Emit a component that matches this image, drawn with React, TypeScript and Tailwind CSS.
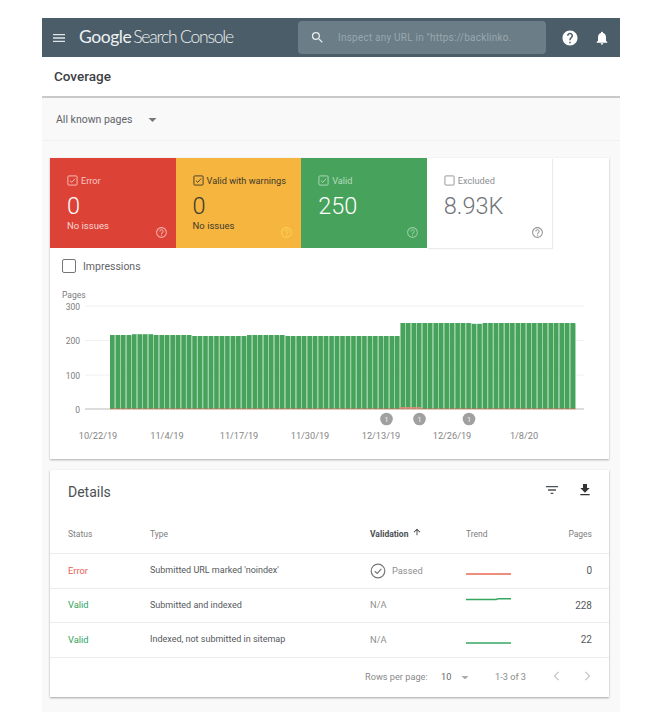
import React from "react";

const P = {
  menu: "M3 18h18v-2H3v2zm0-5h18v-2H3v2zm0-7v2h18V6H3z",
  search: "M15.5 14h-.79l-.28-.27A6.47 6.47 0 0 0 16 9.5 6.5 6.5 0 1 0 9.5 16c1.61 0 3.09-.59 4.23-1.57l.27.28v.79l5 4.99L20.49 19l-4.99-5zm-6 0C7.01 14 5 11.99 5 9.5S7.01 5 9.5 5 14 7.01 14 9.5 11.99 14 9.5 14z",
  help: "M12 2C6.48 2 2 6.48 2 12s4.48 10 10 10 10-4.48 10-10S17.52 2 12 2zm1 17h-2v-2h2v2zm2.07-7.75l-.9.92C13.45 12.9 13 13.5 13 15h-2v-.5c0-1.1.45-2.1 1.17-2.83l1.24-1.26c.37-.36.59-.86.59-1.41 0-1.1-.9-2-2-2s-2 .9-2 2H8c0-2.21 1.79-4 4-4s4 1.79 4 4c0 .88-.36 1.68-.93 2.25z",
  bell: "M12 22c1.1 0 2-.9 2-2h-4c0 1.1.89 2 2 2zm6-6v-5c0-3.07-1.64-5.64-4.5-6.32V4c0-.83-.67-1.5-1.5-1.5s-1.5.67-1.5 1.5v.68C7.63 5.36 6 7.92 6 11v5l-2 2v1h16v-1l-2-2z",
  filter: "M10 18h4v-2h-4v2zM3 6v2h18V6H3zm3 7h12v-2H6v2z",
  download: "M19 9h-4V3H9v6H5l7 7 7-7zM5 18v2h14v-2H5z",
  helpOutline: "M11 18h2v-2h-2v2zm1-16C6.48 2 2 6.48 2 12s4.48 10 10 10 10-4.48 10-10S17.52 2 12 2zm0 18c-4.41 0-8-3.59-8-8s3.59-8 8-8 8 3.59 8 8-3.59 8-8 8zm0-14c-2.21 0-4 1.79-4 4h2c0-1.1.9-2 2-2s2 .9 2 2c0 2-3 1.75-3 5h2c0-2.25 3-2.5 3-5 0-2.21-1.79-4-4-4z",
  arrowUp: "M4 12l1.41 1.41L11 7.83V20h2V7.83l5.58 5.59L20 12l-8-8-8 8z",
};

function Icon({ d, className }: { d: string; className: string }) {
  return (
    <svg viewBox="0 0 24 24" className={className} fill="currentColor">
      <path d={d} />
    </svg>
  );
}

function Check({ checked, className }: { checked: boolean; className: string }) {
  return (
    <svg viewBox="0 0 12 12" className={className} fill="none" stroke="currentColor">
      <rect x="1" y="1" width="10" height="10" rx="1" strokeWidth="1" />
      {checked && <path d="M3.2 6.2 5.2 8 8.8 4" strokeWidth="1" />}
    </svg>
  );
}

const tiles = [
  { label: "Error", value: "0", sub: "No issues", bg: "bg-[#dd4237]", text: "text-white", labelC: "text-[#f6c6c1]", subC: "text-[#f8d5d1]", helpC: "text-[#f1aaa4]", checked: true },
  { label: "Valid with warnings", value: "0", sub: "No issues", bg: "bg-[#f5b53f]", text: "text-[#3c3a30]", labelC: "text-[#3f3a2c]", subC: "text-[#3f3a2c]", helpC: "text-[#fbcf4e]", checked: true },
  { label: "Valid", value: "250", sub: "", bg: "bg-[#47a25b]", text: "text-white", labelC: "text-[#b5dcbf]", subC: "", helpC: "text-[#8ecba0]", checked: true },
  { label: "Excluded", value: "8.93K", sub: "", bg: "bg-white shadow-[1px_1px_1px_rgba(0,0,0,0.08)]", text: "text-[#6f7478]", labelC: "text-[#8c8f92]", subC: "", helpC: "text-[#9a9a9a]", checked: false },
];

const barTop = (i: number) => {
  if (i < 4) return 335;
  if (i < 8) return 334.2;
  if (i < 15) return 335;
  if (i < 25) return 336;
  if (i < 32) return 335;
  if (i < 53) return 336;
  if (i === 66 || i === 67) return 323.8;
  return 323;
};

const bars = Array.from({ length: 85 }, (_, i) => i);
const grid = [
  { y: 306, t: "300" },
  { y: 340.5, t: "200" },
  { y: 375, t: "100" },
  { y: 409, t: "0" },
];
const dates = [
  [98, "10/22/19"],
  [167, "11/4/19"],
  [239, "11/17/19"],
  [310, "11/30/19"],
  [381, "12/13/19"],
  [452, "12/26/19"],
  [524, "1/8/20"],
] as const;

function Chart() {
  // drawn in page coordinates
  return (
    <svg viewBox="50 285 559 174" className="block h-[174px] w-[559px]" fontFamily="Roboto, sans-serif">
      <text x="62" y="298" fontSize="8.5" fill="#7c7c7c">Pages</text>
      {grid.map((g) => (
        <g key={g.t}>
          <line x1="85" x2="584" y1={g.y} y2={g.y} stroke={g.t === "0" ? "#a8a8a8" : "#ececec"} strokeWidth="0.8" />
          <text x="80" y={g.y + 3.5} fontSize="8.5" textAnchor="end" fill="#7c7c7c">{g.t}</text>
        </g>
      ))}
      {bars.map((i) => {
        const x = 110 + i * 5.48;
        const t = barTop(i);
        return <rect key={i} x={x} y={t} width={4.7} height={409 - t} fill="#47a25b" />;
      })}
      {bars.map((i) => (
        <rect key={i} x={110 + i * 5.48 + 4.7} y={barTop(i) + 0.5} width={0.78} height={408 - barTop(i)} fill="#8ccb9c" />
      ))}
      <line x1="110" x2="576" y1="408.8" y2="408.8" stroke="#e8624f" strokeWidth="0.6" />
      <rect x="400" y="407.2" width="21" height="1.4" fill="#ee8a7c" />
      {[386.5, 419.5, 469].map((cx) => (
        <g key={cx}>
          <circle cx={cx} cy="419" r="6.3" fill="#a0a0a0" />
          <text x={cx} y="422" fontSize="8" textAnchor="middle" fill="#ececec">1</text>
        </g>
      ))}
      {dates.map(([x, t]) => (
        <text key={t} x={x} y="439" fontSize="9.2" textAnchor="middle" fill="#858585">{t}</text>
      ))}
    </svg>
  );
}

function Trend({ color, d }: { color: string; d: string }) {
  return (
    <svg viewBox="0 0 45 14" className="h-[14px] w-[45px]" fill="none" stroke={color} strokeWidth="1.6">
      <path d={d} />
    </svg>
  );
}

const rows = [
  { status: "Error", c: "text-[#e8604f]", type: "Submitted URL marked 'noindex'", val: "Passed", trend: "#e8694f", d: "M0 10H45", pages: "0" },
  { status: "Valid", c: "text-[#2fa35a]", type: "Submitted and indexed", val: "N/A", trend: "#35a860", d: "M0 1.5H30L33 .6H45", pages: "228" },
  { status: "Valid", c: "text-[#2fa35a]", type: "Indexed, not submitted in sitemap", val: "N/A", trend: "#35a860", d: "M0 10H45", pages: "22" },
];

const cols = "grid grid-cols-[82px_220px_96px_45px_1fr] items-center pl-[18px] pr-[17px]";

export default function App() {
  return (
    <div className="h-[716px] w-[665px] overflow-hidden bg-white pl-[42px] pt-[18px] font-['Roboto',sans-serif]">
      <div className="flex w-[578px] flex-col">
        <header className="flex h-[39px] items-center bg-[#4a5d68] text-white">
          <Icon d={P.menu} className="ml-[9px] h-[16px] w-[16px] text-[#dfe5e8]" />
          <span className="ml-[12px] w-[160px] whitespace-nowrap font-['Lato',sans-serif] text-[17.5px] tracking-[-0.45px] text-[#eef1f2]">
            <span>Google</span> <span className="ml-[-2px] font-light tracking-[-1.2px]">Search Console</span>
          </span>
          <div className="ml-[59px] flex h-[33px] w-[248px] items-center rounded-[4px] bg-[#6b7d86]">
            <Icon d={P.search} className="ml-[12px] h-[15px] w-[15px] text-[#e8ecee]" />
            <span className="ml-[13px] whitespace-nowrap text-[10px] tracking-[0.22px] text-[#9aa8ae]">Inspect any URL in "https://backlinko.</span>
          </div>
          <Icon d={P.help} className="ml-[15px] h-[18px] w-[18px] text-white" />
          <Icon d={P.bell} className="ml-[15px] h-[16px] w-[16px] text-white" />
        </header>

        <div className="flex h-[41px] items-center border-b-2 border-[#c9c9c9] bg-white pl-[12px] text-[13.5px] font-medium text-[#3c4043]">
          Coverage
        </div>

        <main className="flex h-[614px] flex-col bg-[#f9f9f9]">
          <div className="flex h-[43px] shrink-0 items-center border-b border-[#f0f0f0] pl-[14px] pt-[1px] text-[10.5px] text-[#5f6368]">
            All known pages
            <svg viewBox="0 0 10 5" className="ml-[16px] h-[4px] w-[9px] text-[#777]" fill="currentColor">
              <path d="M0 0h10L5 5z" />
            </svg>
          </div>

          <section className="ml-[8px] mt-[17px] h-[301px] w-[559px] shrink-0 bg-white shadow-[0_1px_2px_rgba(0,0,0,0.3)]">
            <div className="flex h-[90px]">
              {tiles.map((t) => (
                <div key={t.label} className={`relative h-[90px] w-[125.6px] pl-[17px] pt-[17px] ${t.bg} ${t.text}`}>
                  <div className={`flex h-[11px] items-center gap-[3px] text-[9.2px] ${t.labelC}`}>
                    <Check checked={t.checked} className="h-[11px] w-[11px]" />
                    <span className="whitespace-nowrap">{t.label}</span>
                  </div>
                  <div className="mt-[6px] text-[23.5px] leading-[28px] font-light">{t.value}</div>
                  {t.sub && <div className={`mt-0 text-[9.5px] leading-[11px] ${t.subC}`}>{t.sub}</div>}
                  <Icon d={P.helpOutline} className={`absolute bottom-[9px] right-[8px] h-[13px] w-[13px] ${t.helpC}`} />
                </div>
              ))}
            </div>
            <div className="flex h-[37px] items-start gap-[7px] pl-[12px] pt-[11px] text-[10.5px] text-[#5f6368]">
              <span className="h-[14px] w-[14px] rounded-[2px] border-[1.5px] border-[#757575]" />
              <span className="leading-[15px]">Impressions</span>
            </div>
            <Chart />
          </section>

          <section className="ml-[8px] mt-[11px] flex h-[227px] w-[559px] shrink-0 flex-col bg-white shadow-[0_1px_2px_rgba(0,0,0,0.35)]">
            <div className="flex h-[45px] items-center pb-[6px] pl-[18px] pr-[16px] text-[14px] text-[#4b5054]">
              <span className="mt-[6px] flex-1">Details</span>
              <Icon d={P.filter} className="h-[16px] w-[16px] text-[#4b5054]" />
              <Icon d={P.download} className="ml-[17px] h-[16px] w-[16px] text-[#333]" />
            </div>
            <div className={`${cols} h-[39px] border-b border-[#ececec] text-[8.5px] text-[#808080]`}>
              <span>Status</span>
              <span>Type</span>
              <span className="flex items-center gap-[4px] font-bold text-[#4b5054]">
                Validation
                <Icon d={P.arrowUp} className="-mt-[4px] h-[10px] w-[10px] text-[#333]" />
              </span>
              <span>Trend</span>
              <span className="text-right">Pages</span>
            </div>
            {rows.map((r) => (
              <div key={r.type} className={`${cols} h-[34.5px] border-b border-[#ececec] text-[9.3px] text-[#55595c]`}>
                <span className={r.c}>{r.status}</span>
                <span className="whitespace-nowrap text-[9px]">{r.type}</span>
                {r.val === "Passed" ? (
                  <span className="flex items-center gap-[6px] text-[#8f8f8f]">
                    <svg viewBox="0 0 16 16" className="h-[16px] w-[16px]" fill="none" stroke="#777" strokeWidth="1.2">
                      <circle cx="8" cy="8" r="6.8" />
                      <path d="M4.8 8.2 7.2 10.5 11.4 5.8" />
                    </svg>
                    {r.val}
                  </span>
                ) : (
                  <span className="text-[#8f8f8f]">{r.val}</span>
                )}
                <Trend color={r.trend} d={r.d} />
                <span className="text-right text-[10px]">{r.pages}</span>
              </div>
            ))}
            <div className="flex flex-1 items-center pl-[315px] text-[9.2px] text-[#8a8a8a]">
              <span className="w-[76px] whitespace-nowrap">Rows per page:</span>
              <span className="w-[20px] text-[#666]">10</span>
              <svg viewBox="0 0 10 5" className="h-[3.5px] w-[8px] text-[#aaa]" fill="currentColor">
                <path d="M0 0h10L5 5z" />
              </svg>
              <span className="ml-[26px] w-[50px] whitespace-nowrap">1-3 of 3</span>
              <svg viewBox="0 0 8 12" className="ml-[8px] -mt-[2px] h-[10px] w-[7px]" fill="none" stroke="#c0c0c0" strokeWidth="1.3">
                <path d="M6.5 1 1.5 6l5 5" />
              </svg>
              <svg viewBox="0 0 8 12" className="ml-[24px] -mt-[2px] h-[10px] w-[7px]" fill="none" stroke="#c0c0c0" strokeWidth="1.3">
                <path d="M1.5 1l5 5-5 5" />
              </svg>
            </div>
          </section>
        </main>
      </div>
    </div>
  );
}
